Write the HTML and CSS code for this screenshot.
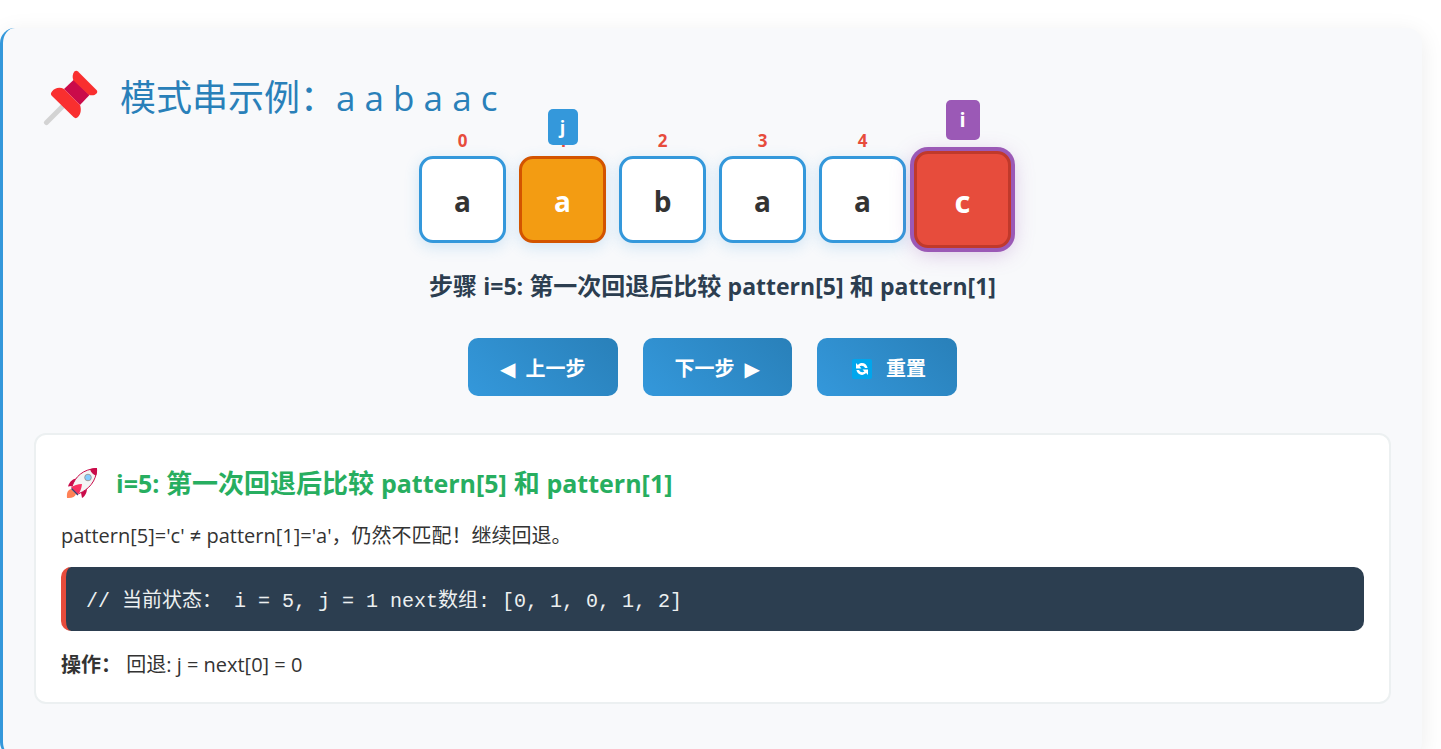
FILE: index.html
```html
<!DOCTYPE html>
<html lang="zh-CN">
<head>
<meta charset="utf-8">
<title>模式串示例</title>
<link rel="stylesheet" href="styles.css">
</head>
<body>
<main class="card">
  <h1 class="title">
    <svg class="pin" viewBox="0 0 56 56" aria-hidden="true">
      <path d="M3.500 52.500 20 36" stroke="#d3d3d3" stroke-width="5" stroke-linecap="round"/>
      <path d="M21 19 31 9.500 46.500 25 37 35z" fill="#ca0b4a"/>
      <path d="M9 21.500c3-4 8-4.500 12-2.500l16 16c1.500 4 1 9-2 12-1.500 1.500-3 1.500-4.500 0L9 26c-1.500-1.500-1.500-3 0-4.500z" fill="#f92f2f"/>
      <path d="M31.500 1.500c1-1 2.500-1 3.500 0l18.500 18.500c1 1 1 2.500 0 3.500-2 2-5 2.500-8 1L30.500 10.500c-1.500-3-1-7 1-9z" fill="#f92f2f"/>
    </svg>
    <span>模式串示例：<span class="title-latin">a a b a a c</span></span>
  </h1>

  <div class="cells">
    <div class="cell"><span class="index">0</span>a</div>
    <div class="cell cell-match"><span class="index">1</span><span class="pointer">j</span>a</div>
    <div class="cell"><span class="index">2</span>b</div>
    <div class="cell"><span class="index">3</span>a</div>
    <div class="cell"><span class="index">4</span>a</div>
    <div class="cell cell-current"><span class="index">5</span><span class="pointer">i</span>c</div>
  </div>

  <p class="step">步骤 <span class="step-latin">i=5:</span> 第一次回退后比较 <span class="step-latin">pattern[5]</span> 和 <span class="step-latin">pattern[1]</span></p>

  <div class="controls">
    <button class="btn" type="button"><span class="arrow">◀</span>上一步</button>
    <button class="btn" type="button">下一步<span class="arrow">▶</span></button>
    <button class="btn btn-reset" type="button">
      <svg class="reset-icon" viewBox="0 0 20 20" aria-hidden="true">
        <rect width="20" height="20" rx="2" fill="#00a6ed"/>
        <path d="M4 4v5.500h5.500L7.600 7.600C9 6.200 11.800 6.500 13 9h2.600C14.800 4.500 9.500 2.300 5.900 5.900z" fill="#fff"/>
        <path d="M16 16v-5.500h-5.500l1.900 1.900C11 13.800 8.200 13.500 7 11H4.400c.8 4.500 6.100 6.700 9.700 3.100z" fill="#fff"/>
      </svg>重置</button>
  </div>

  <section class="panel">
    <h2 class="panel-title">
      <svg class="rocket" viewBox="0 0 32 32" aria-hidden="true">
        <path d="M1 31c-.5-5 .5-8 4-9l5 5c-1 3-4 4.500-9 4z" fill="#ff8257"/>
        <path d="M11 11.500c-4 0-7.500 3-9 8l7-1zM21 21c0 4-1.500 8-5 10l-1.500-8z" fill="#ca0b4a"/>
        <path d="M6 19.500C9 10 17 2 30.500 1.500 31 14 22 23 13 26.500z" fill="#f4f4f4" stroke="#ca0b4a"/>
        <path d="M24 2.300C26 1.400 29 1 31 1c.3 3-.1 5.500-.8 7.500-3-.5-5.400-3-6.200-6.200z" fill="#ca0b4a"/>
        <circle cx="22" cy="10.500" r="3.300" fill="#83cbff" stroke="#9b9b9b"/>
        <path d="M5 20.500c3-2 6.500-3.500 11-3.500-.5 4.500-1.500 7.500-4 10.500z" fill="#f92f60"/>
        <path d="m5.500 21.500 6.500 6.500" stroke="#433b6b" stroke-width="1.500"/>
      </svg>
      <span><span class="panel-latin">i=5:</span> 第一次回退后比较 <span class="panel-latin">pattern[5]</span> 和 <span class="panel-latin">pattern[1]</span></span>
    </h2>
    <p class="text">pattern[5]='c' ≠ pattern[1]='a'，仍然不匹配！继续回退。</p>
    <pre class="code"><code>// 当前状态： i = 5, j = 1 next数组: [0, 1, 0, 1, 2]</code></pre>
    <p class="text"><strong>操作：</strong> 回退: j = next[0] = 0</p>
  </section>
</main>
</body>
</html>
```
FILE: styles.css
```css
* {
  box-sizing: border-box;
}

body {
  margin: 0;
  padding: 28px 19px 0 0;
  background: #fff;
  color: #333;
  font: 20px/36px "Open Sans", "Noto Sans CJK SC", sans-serif;
}

h1, h2, p, pre {
  margin: 0;
}

.card {
  padding: 32px 31px 53px;
  border-left: 3px solid #3498db;
  border-radius: 15px;
  background: #f8f9fb;
  box-shadow: 0 5px 25px rgba(0, 0, 0, 0.08);
}

.title {
  display: flex;
  align-items: center;
  gap: 21px;
  height: 76px;
  padding-left: 9px;
  color: #2980b9;
  font-size: 36px;
  font-weight: 400;
}

.title-latin {
  font-size: 35px;
}

.pin {
  width: 56px;
  height: 56px;
  fill: none;
}

.cells {
  display: grid;
  grid-template: 87px / repeat(6, 87px);
  gap: 13px;
  place-content: center;
  place-items: center;
  margin-top: 20px;
}

.cell {
  position: relative;
  display: grid;
  place-items: center;
  width: 87px;
  height: 87px;
  padding-top: 2px;
  border: 3px solid #3498db;
  border-radius: 14px;
  background: #fff;
  box-shadow: 0 4px 15px rgba(52, 152, 219, 0.2);
  font-family: "Open Sans", sans-serif;
  font-size: 28px;
  font-weight: 700;
}

.cell-match {
  border-color: #d35400;
  background: #f39c12;
  color: #fff;
}

.cell-current {
  width: 97px;
  height: 97px;
  border-color: #c0392b;
  background: #e74c3c;
  box-shadow: 0 0 0 4px #9b59b6, 0 4px 22px rgba(155, 89, 182, 0.4);
  color: #fff;
  font-size: 31px;
}

.index,
.pointer {
  position: absolute;
  left: 50%;
  transform: translateX(-50%);
}

.index {
  top: -30px;
  color: #e74c3c;
  font-family: "Noto Sans", sans-serif;
  font-size: 17px;
  line-height: 24px;
}

.pointer {
  top: -50px;
  width: 30px;
  border-radius: 5px;
  background: #3498db;
  font-size: 18px;
  line-height: 36px;
  text-align: center;
}

.cell-current .index {
  top: -32px;
}

.cell-current .pointer {
  top: -54px;
  width: 34px;
  background: #9b59b6;
  font-size: 20px;
  line-height: 40px;
}

.step {
  margin-top: 23px;
  color: #2c3e50;
  font-size: 24px;
  font-weight: 700;
  line-height: 40px;
  text-align: center;
}

.step-latin {
  font-size: 23px;
}

.controls {
  display: flex;
  justify-content: center;
  gap: 25px;
  margin-top: 32px;
}

.btn {
  display: flex;
  align-items: center;
  gap: 10px;
  height: 58px;
  padding: 3px 32px 0;
  border: 0;
  border-radius: 10px;
  background: linear-gradient(45deg, #3498db, #2980b9);
  color: #fff;
  font: 700 20px/30px "Open Sans", "Noto Sans CJK SC", sans-serif;
}

.arrow {
  font-family: "DejaVu Sans", sans-serif;
}

.btn-reset {
  gap: 14px;
  padding: 3px 31px 0 35px;
}

.reset-icon {
  width: 20px;
  height: 20px;
}

.panel {
  margin-top: 37px;
  padding: 24px 25px 20px;
  border: 2px solid #ecf0f1;
  border-radius: 12px;
  background: #fff;
}

.panel-title {
  display: flex;
  align-items: center;
  gap: 18px;
  margin-bottom: 12px;
  padding-left: 5px;
  color: #27ae60;
  font-size: 26px;
  font-weight: 700;
  line-height: 48px;
}

.panel-latin {
  font-size: 25px;
}

.rocket {
  width: 32px;
  height: 32px;
  fill: none;
}

.text {
  line-height: 34px;
}

.code {
  margin: 14px 0 17px;
  padding: 17px 20px 11px;
  border-left: 5px solid #e74c3c;
  border-radius: 10px;
  background: #2c3e50;
  color: #ecf0f1;
  line-height: 36px;
  white-space: pre-wrap;
}

.code,
.code code {
  font-family: "Liberation Mono", "Noto Sans CJK SC", monospace;
  font-size: 20px;
}
```
